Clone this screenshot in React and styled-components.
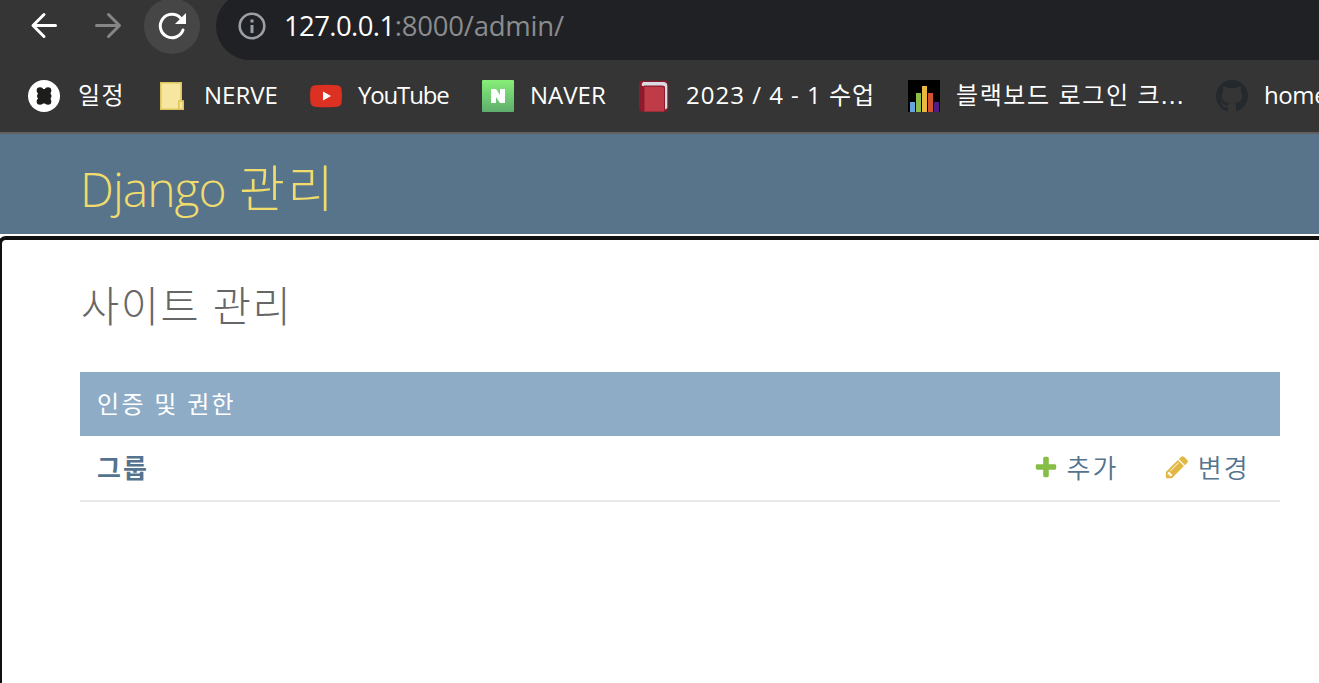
import React from "react";
import styled, { createGlobalStyle } from 'styled-components';

const GlobalStyle = createGlobalStyle`
body {
    margin: 0;
    background: #fff;
    overflow: hidden;
    font-family: 'Open Sans', 'Noto Sans CJK KR', sans-serif;
}
* {
    box-sizing: border-box;
}
`;

const Page = styled.div`
height: 683px;
display: flex;
flex-direction: column;
overflow: hidden;
`;

const Toolbar = styled.div`
height: 60px;
flex: none;
display: flex;
background: #353535;
overflow: hidden;
`;

const NavButton = styled.div`
width: 56px;
height: 56px;
flex: none;
margin: -2px 8px 0 0;
border-radius: 50%;
display: flex;
align-items: center;
justify-content: center;
background: ${({ $active }) => $active ? '#464646' : 'transparent'};

&:first-child {
    margin-left: 16px;
}
`;

const AddressBar = styled.div`
flex: 1;
height: 68px;
margin: -8px -40px 0 8px;
padding-left: 22px;
display: flex;
align-items: center;
background: #202124;
border-radius: 34px;
`;

const Url = styled.div`
margin-left: 18px;
font-size: 27.5px;
line-height: 40px;
white-space: nowrap;
color: #8b8c8e;
letter-spacing: -0.2px;

b {
    font-weight: 400;
    color: #fff;
    letter-spacing: -0.6px;
}
`;

const Bookmarks = styled.div`
height: 72px;
flex: none;
padding-left: 28px;
display: flex;
align-items: center;
gap: 32px;
background: #353535;
`;

const Bookmark = styled.div`
display: flex;
align-items: center;
gap: 16px;
flex: none;

svg {
    flex: none;
}
`;

const BookmarkName = styled.span`
width: ${({ $width }) => $width}px;
padding-bottom: 2px;
font-size: 24px;
line-height: 32px;
white-space: nowrap;
color: #fff;
letter-spacing: ${({ $spacing }) => $spacing || 0}px;
text-indent: ${({ $indent }) => $indent || 0}px;
`;

const Header = styled.header`
height: 102px;
flex: none;
padding: 8px 80px 0;
display: flex;
align-items: center;
background: #57748b;
border-top: 2px solid #625f5e;
`;

const Branding = styled.h1`
margin: 0;
font-size: 48px;
line-height: 64px;
font-weight: 300;
color: #f0dc6c;
white-space: nowrap;
letter-spacing: -1px;

span {
    margin-left: 2px;
    font-size: 50px;
    letter-spacing: 2.5px;
}
`;

const Main = styled.main`
flex: 1;
padding-top: 2px;
background: #fff;
`;

const FocusRing = styled.div`
height: 600px;
margin: 0 -10px 0 -2px;
padding: 36px 0 0 79px;
border: 4px solid #101010;
border-radius: 8px;
`;

const Title = styled.h2`
margin: 0;
height: 60px;
font-size: 41.5px;
line-height: 60px;
font-weight: 300;
color: #666;
letter-spacing: 1.6px;
`;

const Module = styled.section`
width: 1200px;
margin: 36px 0 0 -1px;
`;

const Caption = styled.div`
height: 64px;
padding: 0 0 3px 17px;
display: flex;
align-items: center;
font-size: 24px;
letter-spacing: 2.3px;
color: #fff;
background: #8eacc6;
`;

const ModelRow = styled.div`
height: 66px;
padding: 0 30px 2px 17px;
display: flex;
align-items: center;
border-bottom: 2px solid #e8e8e8;
color: #54738e;
font-size: 26px;
letter-spacing: 2.2px;
`;

const ModelName = styled.strong`
flex: 1;
font-weight: 700;
`;

const Action = styled.span`
display: flex;
align-items: center;
gap: 8px;
margin-left: 45px;
font-weight: 350;
`;

const BackIcon = () => (
    <svg width="32" height="32" viewBox="0 0 32 32" fill="none" stroke="#fff" strokeWidth="3" strokeLinecap="round" strokeLinejoin="round">
        <path d="M27.5 15.5H5.5M16 4.5L5 15.5L16 26.5" />
    </svg>
)

const ForwardIcon = () => (
    <svg width="32" height="32" viewBox="0 0 32 32" fill="none" stroke="#868686" strokeWidth="3" strokeLinecap="round" strokeLinejoin="round">
        <path d="M4.5 15.5H27M16.5 4.5L27.5 15.5L16.5 26.5" />
    </svg>
)

const ReloadIcon = () => (
    <svg width="32" height="32" viewBox="0 0 32 32">
        <path d="M27 20A11.7 11.7 0 1 1 24.5 8" fill="none" stroke="#fff" strokeWidth="3" strokeLinecap="round" />
        <path d="M30 3V14H19Z" fill="#fff" />
    </svg>
)

const InfoIcon = () => (
    <svg width="28" height="28" viewBox="0 0 28 28">
        <circle cx="14" cy="14" r="12.3" fill="none" stroke="#9aa0a6" strokeWidth="2.6" />
        <path d="M12.5 7.5h3v3h-3zM12.5 13h3v8h-3z" fill="#9aa0a6" />
    </svg>
)

const CalendarIcon = () => (
    <svg width="32" height="32" viewBox="0 0 32 32">
        <circle cx="16" cy="16" r="16" fill="#fff" />
        <rect x="10" y="9" width="12.5" height="14.5" fill="#1d1d1b" />
        <g fill="#1d1d1b">
            <circle cx="12" cy="10.5" r="3.3" /><circle cx="20" cy="10.5" r="3.3" />
            <circle cx="11.5" cy="16" r="2.5" /><circle cx="21" cy="16" r="2.5" />
            <circle cx="12" cy="21.5" r="3.3" /><circle cx="20" cy="21.5" r="3.3" />
        </g>
    </svg>
)

const FolderIcon = () => (
    <svg width="32" height="32" viewBox="0 0 32 32">
        <path d="M4.8 2.8H25.2V21H27.2V29.2H4.8Z" fill="#f7e6a0" stroke="#dfc65c" strokeWidth="1.6" />
        <path d="M22.8 29V21H27" fill="none" stroke="#dfc65c" strokeWidth="1.6" />
    </svg>
)

const YoutubeIcon = () => (
    <svg width="32" height="32" viewBox="0 0 32 32">
        <path d="M5 5.3Q16 4.3 27 5.3Q31 5.6 31.5 9.5Q32.3 16 31.5 22.5Q31 26.4 27 26.7Q16 27.7 5 26.7Q1 26.4 .5 22.5Q-.3 16 .5 9.5Q1 5.6 5 5.3Z" fill="#dc3023" />
        <path d="M13 11.5L21 16L13 20.5Z" fill="#fff" />
    </svg>
)

const NaverIcon = () => (
    <svg width="32" height="32" viewBox="0 0 32 32">
        <defs>
            <linearGradient id="naver" x1="0" y1="0" x2="0" y2="1">
                <stop offset="0" stopColor="#86ee78" />
                <stop offset="1" stopColor="#5fae6d" />
            </linearGradient>
        </defs>
        <rect width="32" height="32" rx="1" fill="url(#naver)" />
        <path d="M9 9h5l4 6V9h5v14h-5l-4-6v6H9Z" fill="#fff" />
    </svg>
)

const BookIcon = () => (
    <svg width="32" height="32" viewBox="0 0 32 32">
        <path d="M4 .7H27Q30.3 1 30.3 4V28Q30.3 31.5 27 31.5H4Q1 31.5 1 28V4Q1 .7 4 .7Z" fill="#8c1c2b" />
        <path d="M5 2H25Q29.3 2 29.3 6V28L26.5 30V6H4Q3 4 5 2Z" fill="#dadce3" />
        <path d="M6 5.5H24Q27 5.5 27 8.5V31.5H6Z" fill="#8c1c2b" />
        <path d="M6 6.8H24Q26 6.8 26 9V31.5H6Z" fill="#be3b47" />
        <path d="M1 5Q2 7 6.5 6.5V31.5H4Q1 31.5 1 28Z" fill="#8c1c2b" />
    </svg>
)

const ChartIcon = () => (
    <svg width="32" height="32" viewBox="0 0 32 32">
        <rect width="32" height="32" fill="#000" />
        <rect x="2" y="22" width="5" height="10" fill="#65a4e3" />
        <rect x="8" y="13" width="5" height="19" fill="#8cbd45" />
        <rect x="14" y="6" width="5" height="26" fill="#e8b93d" />
        <rect x="20" y="13" width="5" height="19" fill="#d35230" />
        <rect x="26" y="22" width="5" height="10" fill="#4f1d82" />
    </svg>
)

const GithubIcon = () => (
    <svg width="32" height="32" viewBox="0 0 16 16">
        <path fill="#24292e" d="M8 0C3.58 0 0 3.58 0 8c0 3.54 2.29 6.53 5.47 7.59.4.07.55-.17.55-.38 0-.19-.01-.82-.01-1.49-2.01.37-2.53-.49-2.69-.94-.09-.23-.48-.94-.82-1.13-.28-.15-.68-.52-.01-.53.63-.01 1.08.58 1.23.82.72 1.21 1.87.87 2.33.66.07-.52.28-.87.51-1.07-1.78-.2-3.64-.89-3.64-3.95 0-.87.31-1.59.82-2.15-.08-.2-.36-1.02.08-2.12 0 0 .67-.21 2.2.82.64-.18 1.32-.27 2-.27s1.36.09 2 .27c1.53-1.04 2.2-.82 2.2-.82.44 1.1.16 1.92.08 2.12.51.56.82 1.27.82 2.15 0 3.07-1.87 3.75-3.65 3.95.29.25.54.73.54 1.48 0 1.07-.01 1.93-.01 2.2 0 .21.15.46.55.38A8.01 8.01 0 0 0 16 8c0-4.42-3.58-8-8-8z" />
    </svg>
)

// same shapes as the django admin icon-addlink / icon-changelink
const AddIcon = () => (
    <svg width="26" height="26" viewBox="0 0 1792 1792">
        <path fill="#86bd46" d="M1600 796v192q0 40-28 68t-68 28h-416v416q0 40-28 68t-68 28H800q-40 0-68-28t-28-68v-416H288q-40 0-68-28t-28-68V796q0-40 28-68t68-28h416V284q0-40 28-68t68-28h192q40 0 68 28t28 68v416h416q40 0 68 28t28 68z" />
    </svg>
)

const ChangeIcon = () => (
    <svg width="26" height="26" viewBox="0 0 1792 1792">
        <path fill="#e2b743" d="M491 1536l91-91-235-235-91 91v107h128v128h107zm523-928q0-22-22-22-10 0-17 7l-542 542q-7 7-7 17 0 22 22 22 10 0 17-7l542-542q7-7 7-17zm-54-192l416 416-832 832H128v-416zm683 96q0 53-37 90l-166 166-416-416 166-165q36-38 90-38 53 0 91 38l235 234q37 39 37 91z" />
    </svg>
)

const bookmarks = [
    { name: '일정', icon: <CalendarIcon />, width: 48, spacing: 1.5, indent: 2 },
    { name: 'NERVE', icon: <FolderIcon />, width: 74 },
    { name: 'YouTube', icon: <YoutubeIcon />, width: 92, spacing: -1.15 },
    { name: 'NAVER', icon: <NaverIcon />, width: 76 },
    { name: '2023 / 4 - 1 수업', icon: <BookIcon />, width: 190, spacing: 1 },
    { name: '블랙보드 로그인 크...', icon: <ChartIcon />, width: 228, spacing: 1.6 },
    { name: 'home', icon: <GithubIcon />, width: 80, spacing: -0.4 },
];

const App = () => {
    return (
        <Page>
            <GlobalStyle />
            <Toolbar>
                <NavButton><BackIcon /></NavButton>
                <NavButton><ForwardIcon /></NavButton>
                <NavButton $active><ReloadIcon /></NavButton>
                <AddressBar>
                    <InfoIcon />
                    <Url><b>127.0.0.1</b>:8000/admin/</Url>
                </AddressBar>
            </Toolbar>
            <Bookmarks>
                {bookmarks.map(({ name, icon, width, spacing, indent }) => (
                    <Bookmark key={name}>
                        {icon}
                        <BookmarkName $width={width} $spacing={spacing} $indent={indent}>{name}</BookmarkName>
                    </Bookmark>
                ))}
            </Bookmarks>
            <Header>
                <Branding>Django <span>관리</span></Branding>
            </Header>
            <Main>
                <FocusRing>
                    <Title>사이트 관리</Title>
                    <Module>
                        <Caption>인증 및 권한</Caption>
                        <ModelRow>
                            <ModelName>그룹</ModelName>
                            <Action><AddIcon />추가</Action>
                            <Action><ChangeIcon />변경</Action>
                        </ModelRow>
                    </Module>
                </FocusRing>
            </Main>
        </Page>
    )
}

export default App
